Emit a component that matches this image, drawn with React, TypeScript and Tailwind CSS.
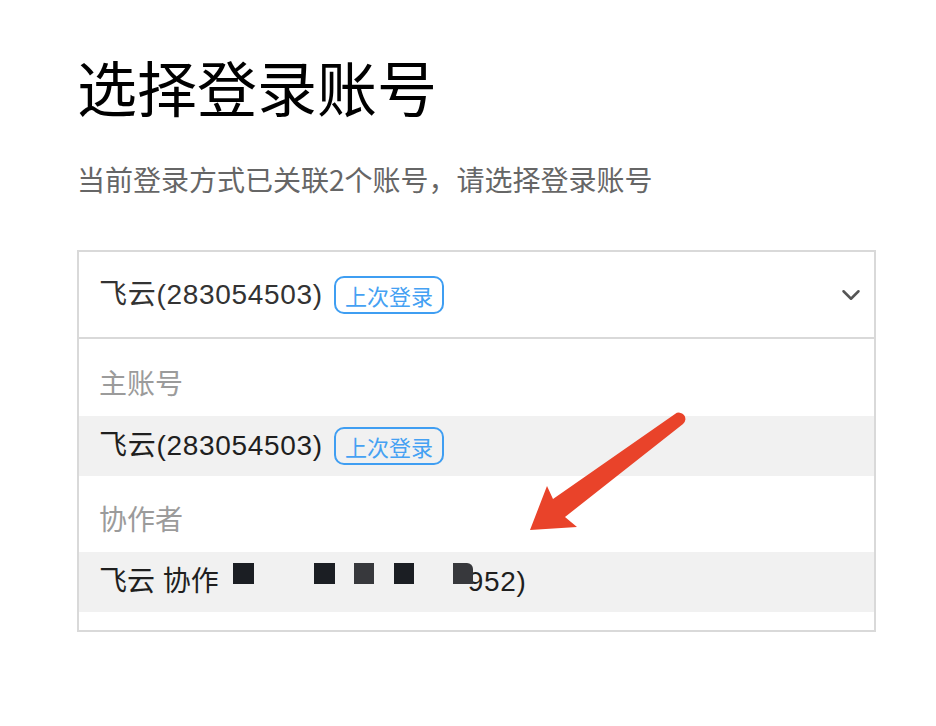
import { ChevronDown } from 'lucide-react';

const latinCjk = "font-['Liberation_Sans','Noto_Sans_CJK_SC',sans-serif]";

function LastLoginBadge() {
  return (
    <span className="ml-[11px] inline-flex h-[38px] items-center rounded-[10px] border-2 border-[#3f9ef2] px-[9px] text-[22px] leading-none tracking-normal text-[#45a1f3] font-['Noto_Sans_CJK_SC',sans-serif]">
      上次登录
    </span>
  );
}

function SectionLabel({ label, h }: { label: string; h: string }) {
  return (
    <div className={`flex items-center pt-[8px] pl-[20px] text-[28px] leading-none text-[#9b9b9b] font-['Noto_Sans_CJK_SC',sans-serif] ${h}`}>
      {label}
    </div>
  );
}

// 打码块（截图里遮住协作者账号）
const masks = [
  { left: 'left-[154px]', w: 'w-[21px]', c: 'bg-[#1b1e23]' },
  { left: 'left-[235px]', w: 'w-[21px]', c: 'bg-[#1b1e23]' },
  { left: 'left-[275px]', w: 'w-[20px]', c: 'bg-[#37383c]' },
  { left: 'left-[315px]', w: 'w-[20px]', c: 'bg-[#1b1e23]' },
  { left: 'left-[374px]', w: 'w-[20px]', c: 'bg-[#37383c] rounded-tr-[6px]' },
];

export default function App() {
  return (
    <main className="relative h-[726px] w-[936px] overflow-hidden bg-white pl-[77px]">
      <h1 className="pt-[56px] text-[60px] leading-none text-black font-['Noto_Sans_CJK_SC',sans-serif]">
        选择登录账号
      </h1>
      <p className="mt-[49px] text-[28px] leading-none text-[#666] font-['Noto_Sans_CJK_SC',sans-serif]">
        当前登录方式已关联2个账号，请选择登录账号
      </p>

      <div className="mt-[57px] w-[799px] border-2 border-[#d9d9d9]">
        {/* selected value */}
        <div className={`flex h-[87px] items-center justify-between border-b-2 border-[#d9d9d9] pl-[20px] pr-[8px] ${latinCjk}`}>
          <div className="flex items-center text-[28px] leading-none text-[#333]">
            <span className="tracking-[0.7px]">飞云(283054503)</span>
            <LastLoginBadge />
          </div>
          <ChevronDown size={30} strokeWidth={2} className="text-[#555]" />
        </div>

        {/* options */}
        <SectionLabel label="主账号" h="h-[77px]" />
        <div className={`flex h-[60px] items-center bg-[#f1f1f1] pl-[20px] text-[28px] leading-none text-[#1f1f1f] ${latinCjk}`}>
          <span className="tracking-[0.7px]">飞云(283054503)</span>
          <LastLoginBadge />
        </div>

        <SectionLabel label="协作者" h="h-[76px]" />
        <div className={`relative flex h-[60px] items-center bg-[#f1f1f1] pl-[20px] text-[28px] leading-none text-[#1f1f1f] ${latinCjk}`}>
          <span>飞云 协作</span>
          <span className="ml-[249px] tracking-[0.7px]">952)</span>
          {masks.map((m, i) => (
            <span key={i} className={`absolute top-[11px] h-[21px] ${m.left} ${m.w} ${m.c}`} />
          ))}
        </div>
        <div className="h-[18px]" />
      </div>

      {/* annotation arrow */}
      <svg className="pointer-events-none absolute left-0 top-0" width="936" height="726" viewBox="0 0 936 726">
        <path
          d="M530 530 L547 486 L553 499 L675 414 A5.5 5.5 0 0 1 683 424 L565 517 L577 527 Z"
          fill="#e9432a"
        />
      </svg>
    </main>
  );
}
